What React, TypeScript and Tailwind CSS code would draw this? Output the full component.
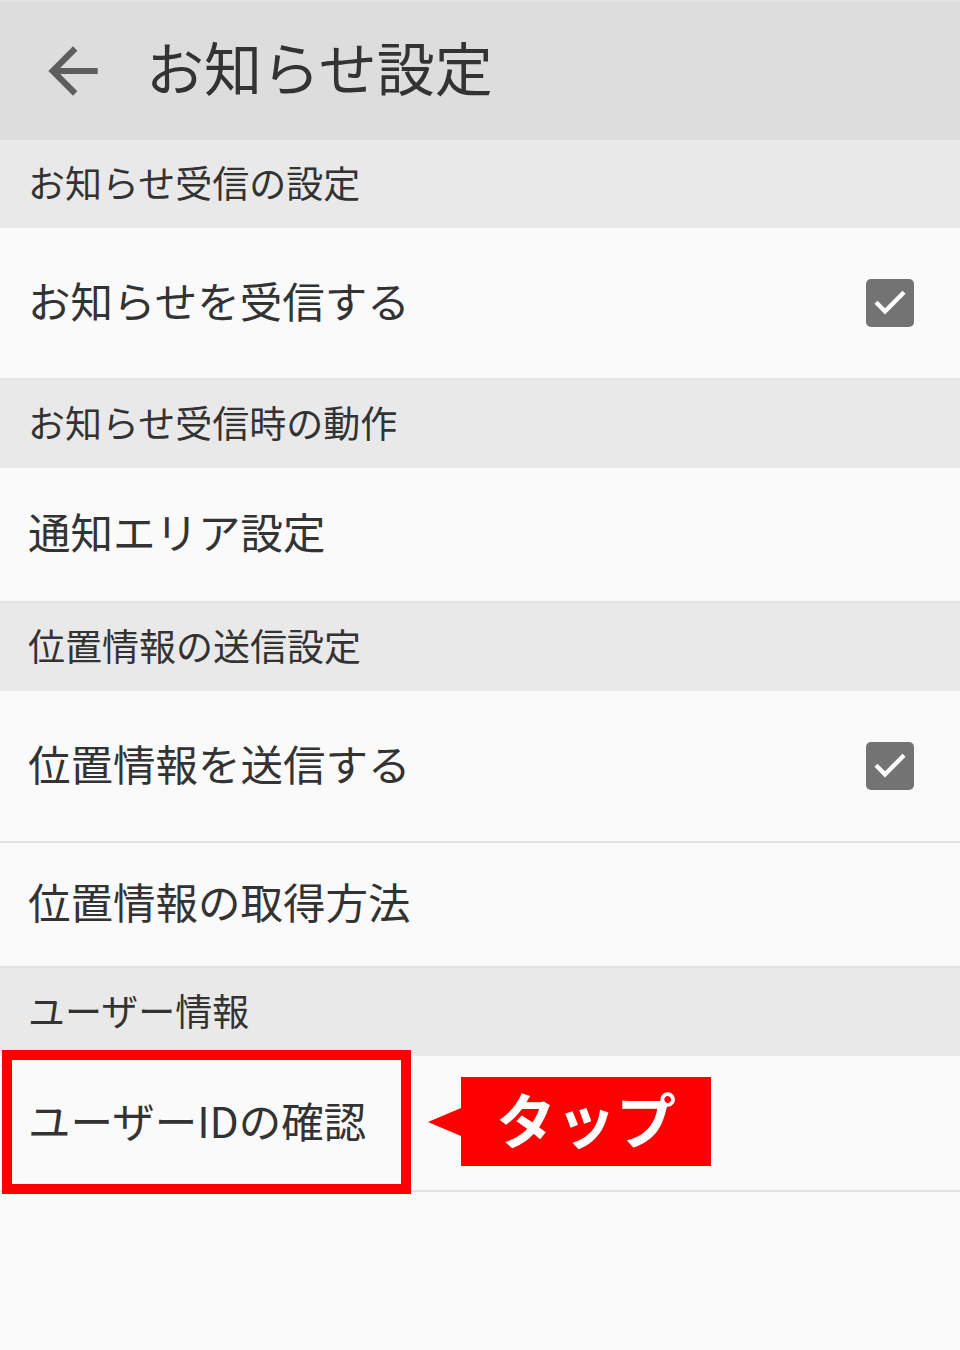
const font = { fontFamily: '"Noto Sans CJK JP", "Noto Sans", sans-serif' };

const CheckBox = () => (
  <div className="w-[48px] h-[48px] rounded-[5px] bg-[#737373] flex items-center justify-center">
    <svg width="40" height="40" viewBox="0 0 24 24">
      <path d="M4.5 12.5l4.5 4.5 10.5-10.5" fill="none" stroke="#fff" strokeWidth="2.6" strokeLinecap="square" />
    </svg>
  </div>
);

const SectionHeader = ({ label }: { label: string }) => (
  <div className="h-[88px] bg-[#e9e9e9] flex items-center pl-[28px] pb-[3px] text-[37px] text-[#333] leading-none">
    {label}
  </div>
);

const Row = ({ label, h, checked }: { label: string; h: string; checked?: boolean }) => (
  <div className={`${h} bg-[#fafafa] flex items-center justify-between pl-[28px] pr-[46px] text-[42.5px] text-[#333] leading-none`}>
    <span className="pb-[6px]">{label}</span>
    {checked && <CheckBox />}
  </div>
);

const Divider = () => <div className="h-[2px] bg-[#e3e3e3]" />;

export default function App() {
  return (
    <div className="w-[960px] h-[1350px] bg-[#fafafa] relative overflow-hidden" style={font}>
      <div className="h-[140px] bg-[#dddddd] border-t-2 border-[#e3e3e3] flex items-center">
        <div className="w-[146px] flex items-center pl-[36px]">
          <svg width="74" height="74" viewBox="0 0 24 24">
            <path d="M20 11H7.83l5.59-5.59L12 4l-8 8 8 8 1.41-1.41L7.83 13H20v-2z" fill="#5e5e5e" />
          </svg>
        </div>
        <span className="text-[58px] text-[#333] leading-none pb-[10px]">お知らせ設定</span>
      </div>

      <SectionHeader label="お知らせ受信の設定" />
      <Row label="お知らせを受信する" h="h-[150px]" checked />
      <Divider />
      <SectionHeader label="お知らせ受信時の動作" />
      <Row label="通知エリア設定" h="h-[133px]" />
      <Divider />
      <SectionHeader label="位置情報の送信設定" />
      <Row label="位置情報を送信する" h="h-[150px]" checked />
      <Divider />
      <Row label="位置情報の取得方法" h="h-[123px]" />
      <Divider />
      <SectionHeader label="ユーザー情報" />
      <Row label="ユーザーIDの確認" h="h-[134px]" />
      <Divider />

      {/* annotation overlay */}
      <div className="absolute left-[2px] top-[1050px] w-[409px] h-[144px] border-[10px] border-[#ff0000]" />
      <div className="absolute left-[428px] top-[1077px] flex items-center">
        <div className="w-0 h-0 border-y-[14px] border-y-transparent border-r-[33px] border-r-[#ff0000]" />
        <div className="w-[250px] h-[89px] bg-[#ff0000] flex items-center justify-center text-white text-[60px] font-bold leading-none pb-[8px]">
          タップ
        </div>
      </div>
    </div>
  );
}
